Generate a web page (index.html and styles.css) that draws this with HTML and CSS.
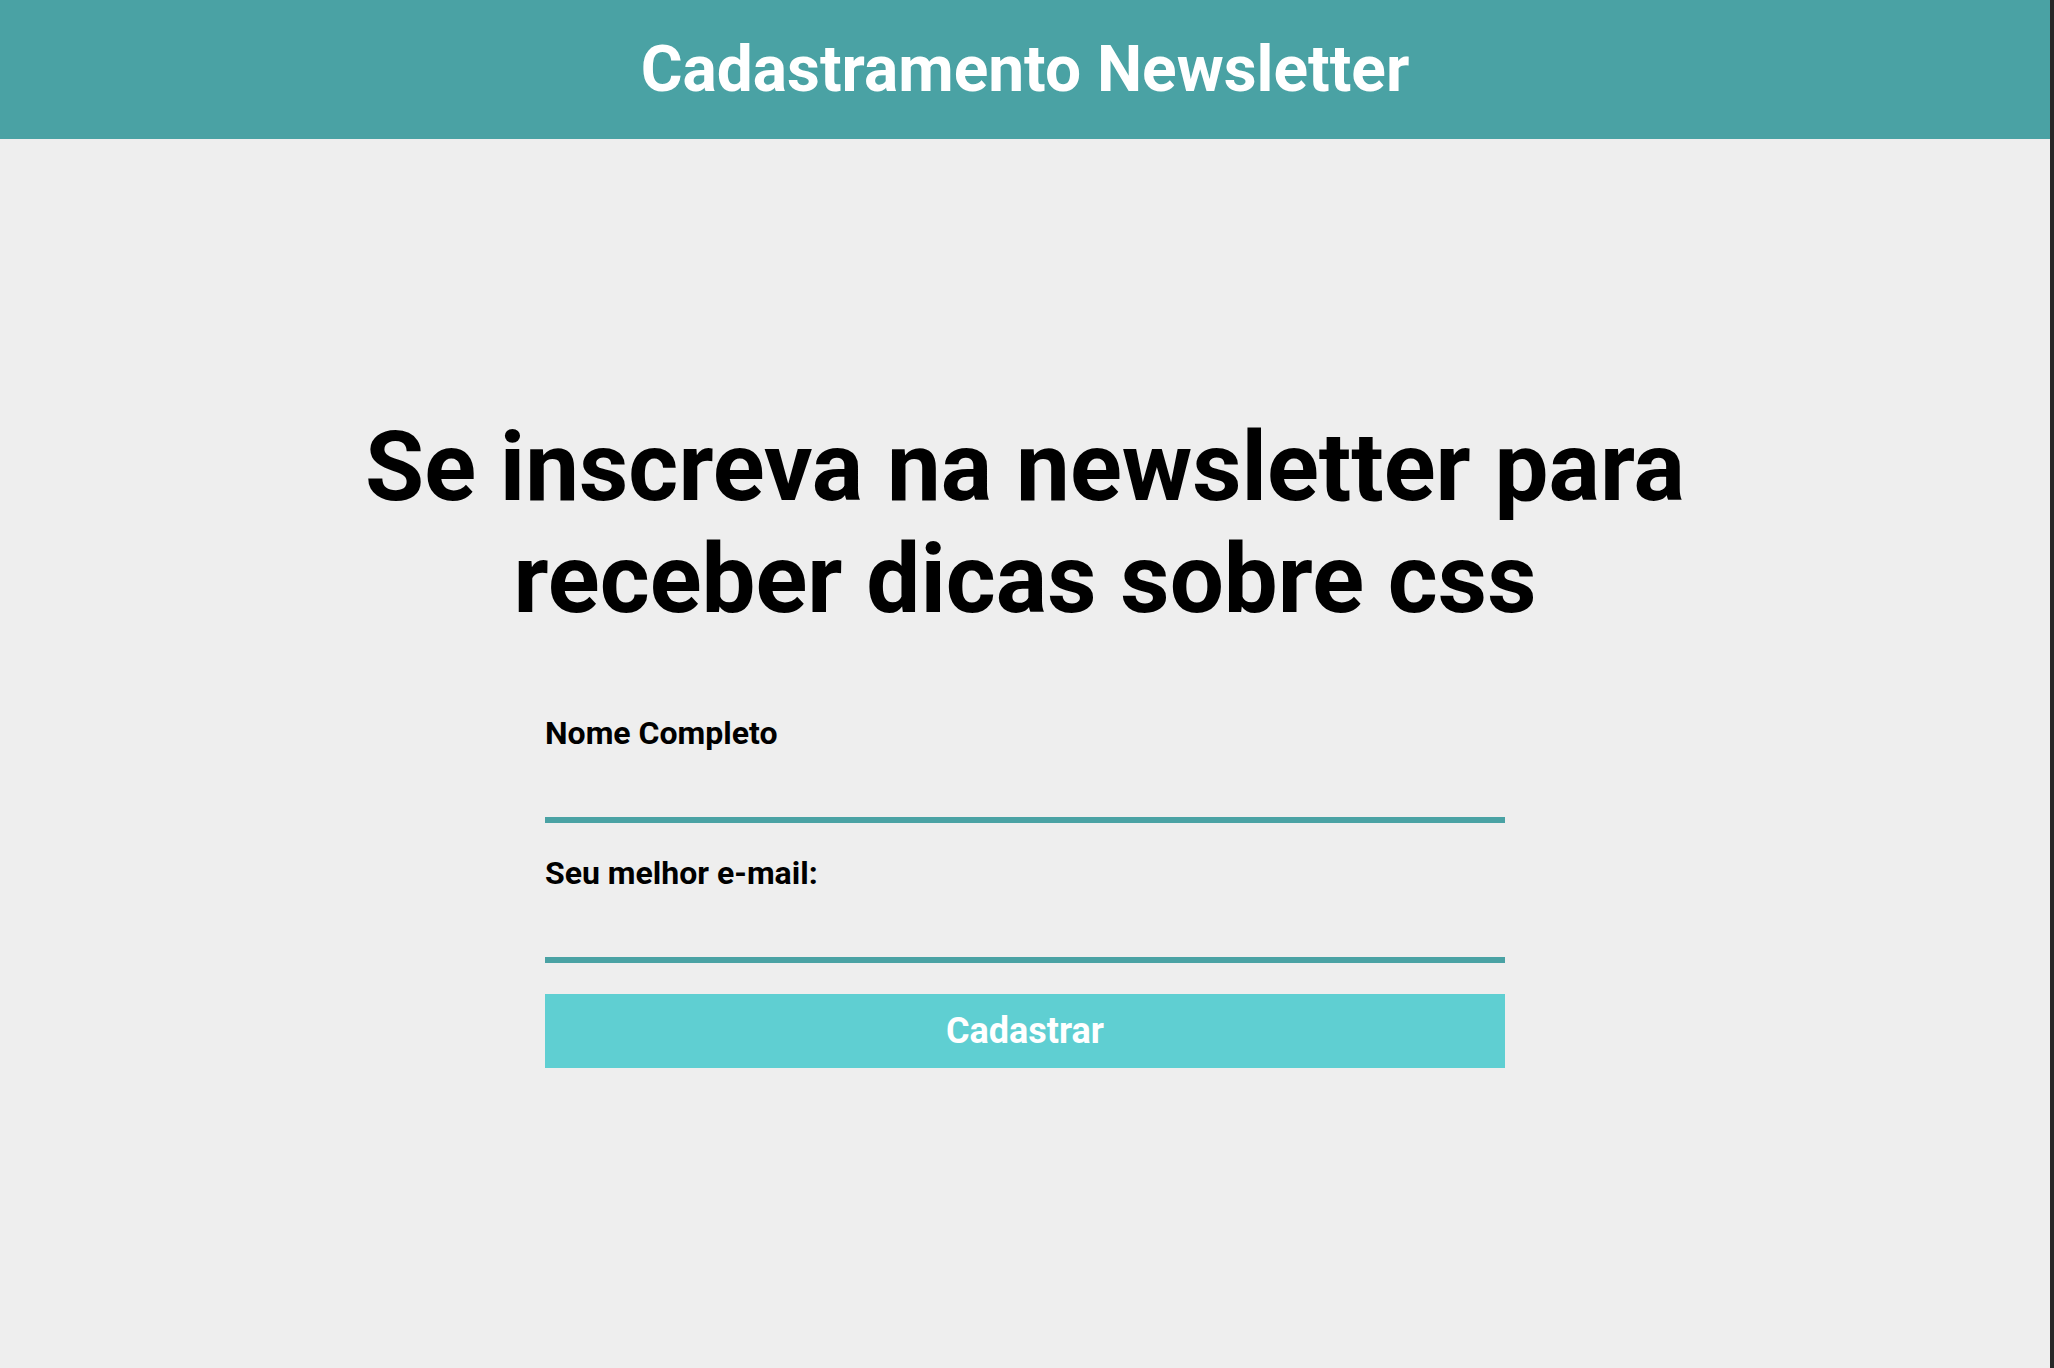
FILE: index.html
```html
<!DOCTYPE html>
<html lang="pt-BR">
<head>
<meta charset="utf-8">
<title>Cadastramento Newsletter</title>
<link rel="stylesheet" href="styles.css">
</head>
<body>
<header class="topbar">
  <h2 class="topbar-title">Cadastramento Newsletter</h2>
</header>
<main class="content">
  <h1 class="headline">Se inscreva na newsletter para receber dicas sobre css</h1>
  <form class="signup">
    <label class="field-label" for="nome">Nome Completo</label>
    <input class="field-input" id="nome" type="text">
    <label class="field-label" for="email">Seu melhor e-mail:</label>
    <input class="field-input" id="email" type="email">
    <button class="submit" type="button">Cadastrar</button>
  </form>
</main>
</body>
</html>
```
FILE: styles.css
```css
html, body {
  margin: 0;
  padding: 0;
}
body {
  box-sizing: border-box;
  min-height: 100vh;
  background: #eeeeee;
  border-right: 4px solid #282828;
  font-family: Roboto, "Liberation Sans", sans-serif;
  color: #000;
}
.topbar {
  height: 139px;
  background: #4aa2a4;
  display: flex;
  align-items: center;
  justify-content: center;
}
.topbar-title {
  margin: 0;
  color: #fff;
  font-size: 64px;
  font-weight: 700;
}
.content {
  padding-top: 272px;
  display: flex;
  flex-direction: column;
  align-items: center;
}
.headline {
  margin: 0;
  max-width: 1500px;
  text-align: center;
  font-size: 96px;
  font-weight: 700;
  line-height: normal;
}
.signup {
  width: 960px;
  margin-top: 79px;
  display: flex;
  flex-direction: column;
}
.field-label {
  font-size: 32px;
  font-weight: 700;
  line-height: normal;
}
.field-input {
  box-sizing: border-box;
  width: 100%;
  height: 71px;
  margin: 0 0 31px;
  padding: 0;
  border: none;
  border-bottom: 6px solid #4aa2a4;
  background: transparent;
  font-family: inherit;
  font-size: 28px;
  outline: none;
}
.submit {
  height: 74px;
  border: none;
  background: #5fcfd2;
  color: #fff;
  font-family: inherit;
  font-size: 36px;
  font-weight: 700;
  cursor: pointer;
}
```
